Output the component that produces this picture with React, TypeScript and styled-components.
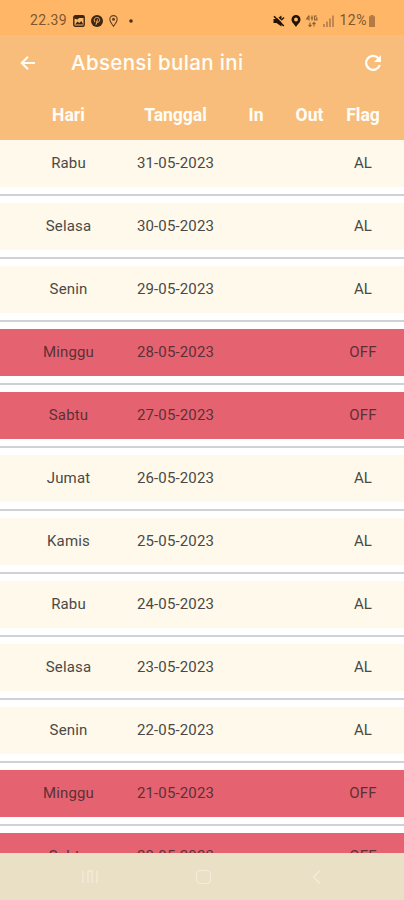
import React from 'react'
import styled, { createGlobalStyle } from 'styled-components'

const GlobalStyle = createGlobalStyle`
    * {
        box-sizing: border-box;
    }

    body {
        margin: 0;
        background: #fff;
        font-family: Roboto, 'Liberation Sans', sans-serif;
    }
`

const Screen = styled.div`
    display: flex;
    flex-direction: column;
    width: 404px;
    height: 900px;
    overflow: hidden;
    background: #fff;
`

const StatusBar = styled.div`
    display: flex;
    flex: none;
    justify-content: space-between;
    height: 35px;
    padding: 6px 28px 0 30px;
    background: #ffb667;
    color: #805630;
`

const StatusGroup = styled.div<{ $gap: number }>`
    display: flex;
    align-items: center;
    height: 29px;
    gap: ${(props) => props.$gap}px;
`

const StatusText = styled.span<{ $spacing: number }>`
    font-size: 14px;
    line-height: 29px;
    letter-spacing: ${(props) => props.$spacing}px;
`

const AppBar = styled.header`
    display: flex;
    flex: none;
    align-items: center;
    height: 55px;
    padding: 0 22px 0 19px;
    background: #f9bd7b;
    color: #fffdf8;
`

const Title = styled.h1`
    flex: 1;
    margin: 0 0 0 34px;
    font-family: Inter, sans-serif;
    font-size: 20.5px;
    font-weight: 500;
    letter-spacing: 0.35px;
    line-height: 55px;
`

const columns = `
    display: grid;
    grid-template-columns: 107px 107px 54px 53px 54px;
    align-items: center;
    padding-left: 15px;
    text-align: center;
`

const TableHead = styled.div`
    ${columns}
    flex: none;
    height: 50px;
    background: #f9bd7b;
    color: #fffdf8;
    font-size: 17.5px;
    font-weight: 700;
`

const TableBody = styled.div`
    flex: 1;
    min-height: 0;
    overflow: hidden;
`

const RowSlot = styled.div`
    height: 63px;
`

const Row = styled.div<{ $off: boolean }>`
    ${columns}
    height: 47px;
    padding-bottom: 1px;
    background: ${(props) => (props.$off ? '#e56371' : '#fff9eb')};
    color: ${(props) => (props.$off ? '#5c3036' : '#4b4946')};
    font-size: 15px;
    letter-spacing: 0.15px;
`

const Divider = styled.div`
    height: 2px;
    margin-top: 7px;
    background: #d0d1d4;
`

const NavBar = styled.nav`
    display: flex;
    flex: none;
    justify-content: space-between;
    height: 47px;
    padding: 15px 78px 0 80px;
    background: #eae0c6;
    color: #f3ecda;
`

const Icon = styled.svg`
    display: block;
    flex: none;
    overflow: visible;
`

const StatusIcons = () => (
    <StatusGroup $gap={6}>
        <StatusText $spacing={0.35}>22.39</StatusText>
        <Icon width="12" height="12" viewBox="0 0 12 12">
            <rect
                x="0.8"
                y="0.8"
                width="10.4"
                height="10.4"
                rx="1.5"
                fill="none"
                stroke="#3e2712"
                strokeWidth="1.4"
            />
            <path
                d="M1 1h10v2H6L4.5 4.5 1 3.5zM2 9.5l2.5-3 1.8 1.5L8.3 6l2 3.5z"
                fill="#3e2712"
            />
        </Icon>
        <Icon width="12" height="12" viewBox="0 0 12 12">
            <circle cx="6" cy="6" r="6" fill="#3e2712" />
            <path
                d="M4 7.2C2 4 4.4 2.2 6.5 2.5 9.5 3 9 7.2 7 7.2 6 7.2 5.8 6.6 5.8 6.6M6.5 4.4L5 9.8"
                fill="none"
                stroke="#ffb667"
                strokeWidth="1"
            />
        </Icon>
        <Icon width="9" height="12" viewBox="0 0 9 12">
            <path
                d="M4.5 11.3C3 8.8 0.8 7 0.8 4.3a3.7 3.7 0 0 1 7.4 0c0 2.7-2.2 4.5-3.7 7z"
                fill="none"
                stroke="#654120"
                strokeWidth="1.1"
            />
            <circle cx="4.5" cy="4.3" r="1.5" fill="#654120" />
        </Icon>
        <Icon width="14" height="4" viewBox="0 0 14 4">
            <circle cx="7" cy="2" r="1.8" fill="#4b3018" />
        </Icon>
    </StatusGroup>
)

const SystemIcons = () => (
    <StatusGroup $gap={5.3}>
        <Icon width="12" height="12" viewBox="0 0 12 12">
            <path d="M0.5 4h3L8.5 0.5v11L3.5 8h-3z" fill="#211407" />
            <path d="M2 0L12 10" stroke="#ffb667" strokeWidth="1.2" />
            <path d="M1 1.2L10.8 11" stroke="#211407" strokeWidth="1.6" />
            <path d="M8.5 5l2.5-2.5" stroke="#211407" strokeWidth="1.2" />
        </Icon>
        <Icon width="10" height="12" viewBox="0 0 10 12">
            <path
                d="M5 12C3.2 9 0.5 7.5 0.5 4.5a4.5 4.5 0 0 1 9 0C9.5 7.5 6.8 9 5 12z"
                fill="#211407"
            />
            <circle cx="5" cy="4.5" r="1.9" fill="#ffb667" />
        </Icon>
        <Icon width="12" height="12" viewBox="0 0 12 12">
            <path
                d="M3 0.5L0.6 4h3M3 0.5V5.5M6 0.5V5.5M4.8 3h2.4M10.8 1H8.6v4h2.3V3H10M4 7.5v4M2.5 10L4 11.5 5.5 10M8 11.5v-4M6.5 9L8 7.5 9.5 9"
                fill="none"
                stroke="#89602f"
                strokeWidth="1.1"
            />
        </Icon>
        <Icon width="11" height="12" viewBox="0 0 11 12">
            <path
                d="M1 9v3M4 6.5V12M7 3.5V12M10 0.5V12"
                fill="none"
                stroke="#ab794a"
                strokeWidth="1.5"
            />
        </Icon>
        <StatusGroup $gap={1}>
            <StatusText $spacing={0.5}>12%</StatusText>
            <Icon width="8" height="12" viewBox="0 0 8 12">
                <path d="M2.5 0h3v1.3H7V12H1V1.3h1.5z" fill="#b37a46" />
            </Icon>
        </StatusGroup>
    </StatusGroup>
)

const BackIcon = () => (
    <Icon width="18" height="18" viewBox="0 0 18 18">
        <path
            d="M16 9H3M9 2.7L2.7 9 9 15.3"
            fill="none"
            stroke="currentColor"
            strokeWidth="2"
        />
    </Icon>
)

const RefreshIcon = () => (
    <Icon width="18" height="18" viewBox="0 0 18 18">
        <path
            d="M14.5 4.4A7 7 0 1 0 15.8 11"
            fill="none"
            stroke="currentColor"
            strokeWidth="2.3"
        />
        <path d="M17 1v7h-7z" fill="currentColor" />
    </Icon>
)

const RecentsIcon = () => (
    <Icon width="20" height="18" viewBox="0 0 20 18">
        <path
            d="M3 3v12M8 15V3h4v12M17 3v12"
            fill="none"
            stroke="currentColor"
            strokeWidth="1.4"
        />
    </Icon>
)

const HomeIcon = () => (
    <Icon width="20" height="18" viewBox="0 0 20 18">
        <rect
            x="3.5"
            y="2.5"
            width="14"
            height="13"
            rx="4"
            fill="none"
            stroke="currentColor"
            strokeWidth="1.2"
        />
    </Icon>
)

const NavBackIcon = () => (
    <Icon width="20" height="18" viewBox="0 0 20 18">
        <path
            d="M14 2.5L7.5 9l6.5 6.5"
            fill="none"
            stroke="currentColor"
            strokeWidth="1.4"
        />
    </Icon>
)

interface Attendance {
    day: string
    date: string
    flag: 'AL' | 'OFF'
}

const attendances: Attendance[] = [
    { day: 'Rabu', date: '31-05-2023', flag: 'AL' },
    { day: 'Selasa', date: '30-05-2023', flag: 'AL' },
    { day: 'Senin', date: '29-05-2023', flag: 'AL' },
    { day: 'Minggu', date: '28-05-2023', flag: 'OFF' },
    { day: 'Sabtu', date: '27-05-2023', flag: 'OFF' },
    { day: 'Jumat', date: '26-05-2023', flag: 'AL' },
    { day: 'Kamis', date: '25-05-2023', flag: 'AL' },
    { day: 'Rabu', date: '24-05-2023', flag: 'AL' },
    { day: 'Selasa', date: '23-05-2023', flag: 'AL' },
    { day: 'Senin', date: '22-05-2023', flag: 'AL' },
    { day: 'Minggu', date: '21-05-2023', flag: 'OFF' },
    { day: 'Sabtu', date: '20-05-2023', flag: 'OFF' },
]

const App = () => (
    <>
        <GlobalStyle />
        <Screen>
            <StatusBar>
                <StatusIcons />
                <SystemIcons />
            </StatusBar>
            <AppBar>
                <BackIcon />
                <Title>Absensi bulan ini</Title>
                <RefreshIcon />
            </AppBar>
            <TableHead>
                <span>Hari</span>
                <span>Tanggal</span>
                <span>In</span>
                <span>Out</span>
                <span>Flag</span>
            </TableHead>
            <TableBody>
                {attendances.map(({ day, date, flag }) => (
                    <RowSlot key={date}>
                        <Row $off={flag === 'OFF'}>
                            <span>{day}</span>
                            <span>{date}</span>
                            <span />
                            <span />
                            <span>{flag}</span>
                        </Row>
                        <Divider />
                    </RowSlot>
                ))}
            </TableBody>
            <NavBar>
                <RecentsIcon />
                <HomeIcon />
                <NavBackIcon />
            </NavBar>
        </Screen>
    </>
)

export default App
